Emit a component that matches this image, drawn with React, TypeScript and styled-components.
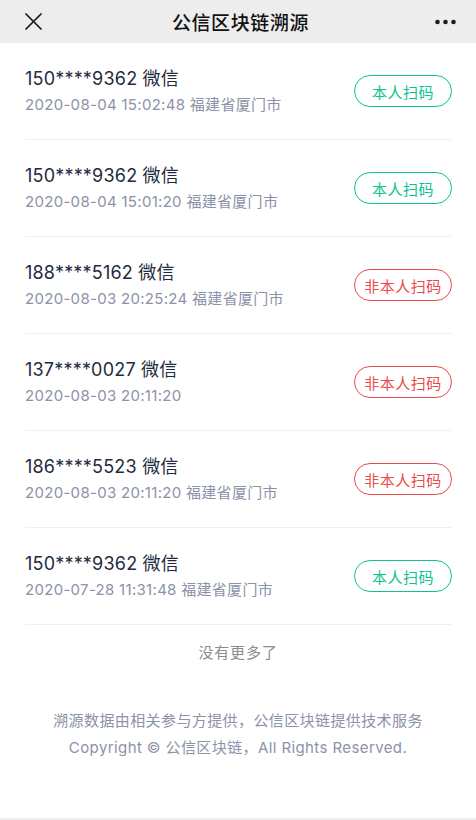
import React from 'react';
import styled, { createGlobalStyle } from 'styled-components';

type Record = {
  phone: string;
  time: string;
  place?: string;
  self: boolean;
};

const records: Record[] = [
  { phone: '150****9362', time: '2020-08-04 15:02:48', place: '福建省厦门市', self: true },
  { phone: '150****9362', time: '2020-08-04 15:01:20', place: '福建省厦门市', self: true },
  { phone: '188****5162', time: '2020-08-03 20:25:24', place: '福建省厦门市', self: false },
  { phone: '137****0027', time: '2020-08-03 20:11:20', self: false },
  { phone: '186****5523', time: '2020-08-03 20:11:20', place: '福建省厦门市', self: false },
  { phone: '150****9362', time: '2020-07-28 11:31:48', place: '福建省厦门市', self: true },
];

const GlobalStyle = createGlobalStyle`
  html, body {
    margin: 0;
    padding: 0;
    background: #fff;
  }
  body {
    font-family: Inter, "Noto Sans CJK SC", sans-serif;
  }
`;

const Page = styled.div`
  width: 476px;
  min-height: 820px;
  display: flex;
  flex-direction: column;
  background: #fff;
  box-sizing: border-box;
  border-bottom: 2px solid #ededed;
`;

const NavBar = styled.div`
  height: 43px;
  background: #ededed;
  display: grid;
  grid-template-columns: 1fr auto 1fr;
  align-items: center;
  padding: 0 20px 0 25px;
`;

const NavTitle = styled.div`
  font-size: 19px;
  font-weight: 500;
  color: #111;
  letter-spacing: 0.6px;
`;

const NavIcon = styled.div<{ $end?: boolean }>`
  display: flex;
  align-items: center;
  justify-content: ${p => (p.$end ? 'flex-end' : 'flex-start')};
`;

const List = styled.div`
  display: flex;
  flex-direction: column;
  padding: 0 24px 0 25px;
`;

const Row = styled.div`
  height: 96px;
  display: flex;
  align-items: center;
  justify-content: space-between;
  border-bottom: 1px solid #f0f0f0;
`;

const Info = styled.div`
  display: flex;
  flex-direction: column;
  gap: 4px;
`;

const Phone = styled.div`
  font-size: 18px;
  color: #1e2c3e;
  line-height: 24px;
  letter-spacing: 0.2px;
`;

const Meta = styled.div`
  font-size: 15px;
  color: #8c92a8;
  line-height: 20px;
  letter-spacing: 0.3px;
`;

const Tag = styled.div<{ $self: boolean }>`
  height: 32px;
  width: 98px;
  box-sizing: border-box;
  border-radius: 16px;
  border: 1px solid ${p => (p.$self ? '#0bc38f' : '#ea4a4a')};
  color: ${p => (p.$self ? '#0bc38f' : '#ea4a4a')};
  font-size: 15px;
  display: flex;
  align-items: center;
  justify-content: center;
  letter-spacing: 0.5px;
`;

const NoMore = styled.div`
  text-align: center;
  font-size: 15px;
  color: #8c8c8c;
  margin-top: 16px;
  letter-spacing: 0.8px;
`;

const Footer = styled.div`
  margin-top: 45px;
  text-align: center;
  font-size: 15px;
  line-height: 27px;
  color: #8c92a8;
  letter-spacing: 0.4px;
`;

const CloseIcon = () => (
  <svg width="17" height="17" viewBox="0 0 17 17">
    <path d="M1 1 L16 16 M16 1 L1 16" stroke="#1a1a1a" strokeWidth="1.7" strokeLinecap="round" />
  </svg>
);

const MoreIcon = () => (
  <svg width="21" height="6" viewBox="0 0 21 6">
    <circle cx="2.5" cy="3" r="2.3" fill="#1a1a1a" />
    <circle cx="10.5" cy="3" r="2.3" fill="#1a1a1a" />
    <circle cx="18.5" cy="3" r="2.3" fill="#1a1a1a" />
  </svg>
);

const App = () => (
  <>
    <GlobalStyle />
    <Page>
      <NavBar>
        <NavIcon><CloseIcon /></NavIcon>
        <NavTitle>公信区块链溯源</NavTitle>
        <NavIcon $end><MoreIcon /></NavIcon>
      </NavBar>
      <List>
        {records.map((r, i) => (
          <Row key={i}>
            <Info>
              <Phone>{r.phone} 微信</Phone>
              <Meta>
                {r.time}
                {r.place ? ` ${r.place}` : ''}
              </Meta>
            </Info>
            <Tag $self={r.self}>{r.self ? '本人扫码' : '非本人扫码'}</Tag>
          </Row>
        ))}
      </List>
      <NoMore>没有更多了</NoMore>
      <Footer>
        溯源数据由相关参与方提供，公信区块链提供技术服务
        <br />
        Copyright © 公信区块链，All Rights Reserved.
      </Footer>
    </Page>
  </>
);

export default App;
